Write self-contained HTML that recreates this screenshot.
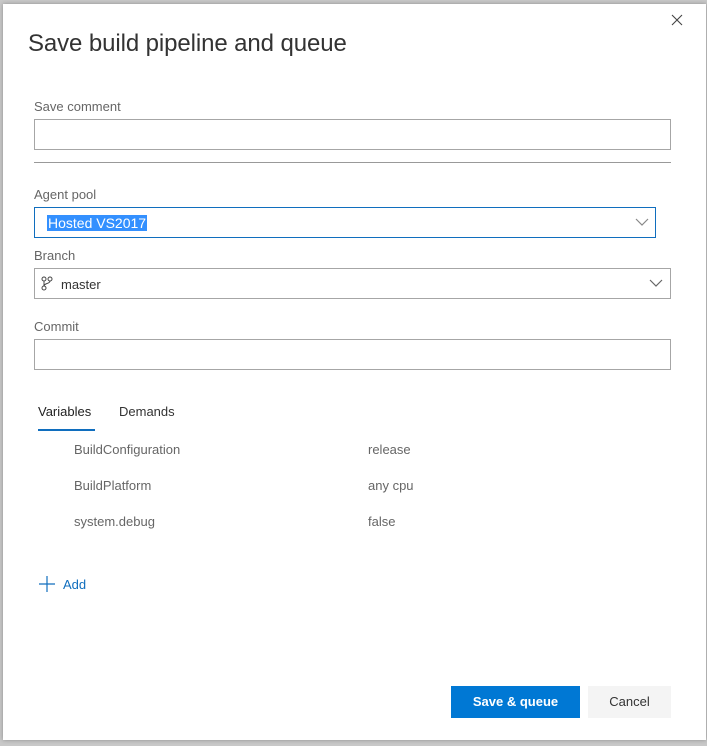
<!DOCTYPE html>
<html><head><style>
*{box-sizing:border-box;margin:0;padding:0}
body{width:707px;height:746px;background:#c8c8c8;font-family:"Liberation Sans",sans-serif;position:relative;overflow:hidden}
.dlg{position:absolute;left:3px;top:4px;width:703px;height:736px;background:#fff;box-shadow:0 0 4px rgba(0,0,0,.3)}
.a{position:absolute}
.lbl{font-size:13px;color:#666}
.box{position:absolute;left:31px;width:637px;height:31px;border:1px solid #a6a6a6;background:#fff}
.txt{font-size:13px;color:#333}
</style></head><body>
<div class="dlg">
<svg class="a" style="left:668px;top:10px" width="12" height="12"><path d="M1 1l10 10M11 1L1 11" stroke="#444" stroke-width="1.1"/></svg>
<div class="a" style="left:25px;top:26px;font-size:24px;color:#333;font-weight:300;letter-spacing:-0.1px">Save build pipeline and queue</div>
<div class="a lbl" style="left:31px;top:95px">Save comment</div>
<div class="box" style="top:115px"></div>
<div class="a" style="left:31px;top:158px;width:637px;height:1px;background:#999"></div>
<div class="a lbl" style="left:31px;top:183px">Agent pool</div>
<div class="box" style="top:203px;width:622px;border-color:#106ebe">
 <span class="a" style="left:12px;top:7px;background:#3390ff;color:#fff;font-size:14px;padding:0 1px;line-height:16px">Hosted VS2017</span>
 <svg class="a" style="left:600px;top:10px" width="14" height="9"><path d="M1 1l6 6 6-6" fill="none" stroke="#888" stroke-width="1.2"/></svg>
</div>
<div class="a lbl" style="left:31px;top:244px">Branch</div>
<div class="box" style="top:264px">
 <svg class="a" style="left:6px;top:7px" width="12" height="16"><circle cx="3" cy="3" r="2" fill="none" stroke="#444"/><circle cx="3" cy="12" r="2" fill="none" stroke="#444"/><circle cx="9" cy="3" r="2" fill="none" stroke="#444"/><path d="M3 5v5M9 5c0 3-6 2-6 5" fill="none" stroke="#444"/></svg>
 <span class="a txt" style="left:26px;top:8px">master</span>
 <svg class="a" style="left:614px;top:10px" width="14" height="9"><path d="M1 1l6 6 6-6" fill="none" stroke="#666" stroke-width="1.2"/></svg>
</div>
<div class="a lbl" style="left:31px;top:315px">Commit</div>
<div class="box" style="top:335px"></div>
<div class="a" style="left:35px;top:400px;font-size:13px;color:#222">Variables</div>
<div class="a" style="left:35px;top:425px;width:57px;height:2px;background:#106ebe"></div>
<div class="a" style="left:116px;top:400px;font-size:13px;color:#333">Demands</div>
<div class="a lbl" style="left:71px;top:438px">BuildConfiguration</div>
<div class="a lbl" style="left:365px;top:438px">release</div>
<div class="a lbl" style="left:71px;top:474px">BuildPlatform</div>
<div class="a lbl" style="left:365px;top:474px">any cpu</div>
<div class="a lbl" style="left:71px;top:510px">system.debug</div>
<div class="a lbl" style="left:365px;top:510px">false</div>
<svg class="a" style="left:36px;top:572px" width="16" height="16"><path d="M8 0v16M0 8h16" stroke="#106ebe" stroke-width="1.2"/></svg>
<div class="a" style="left:60px;top:573px;font-size:13px;color:#106ebe">Add</div>
<div class="a" style="left:448px;top:682px;width:129px;height:32px;background:#0078d4;color:#fff;font-size:13px;font-weight:bold;text-align:center;line-height:32px">Save &amp; queue</div>
<div class="a" style="left:585px;top:682px;width:83px;height:32px;background:#f4f4f4;color:#333;font-size:13px;text-align:center;line-height:32px">Cancel</div>
</div>
</body></html>
